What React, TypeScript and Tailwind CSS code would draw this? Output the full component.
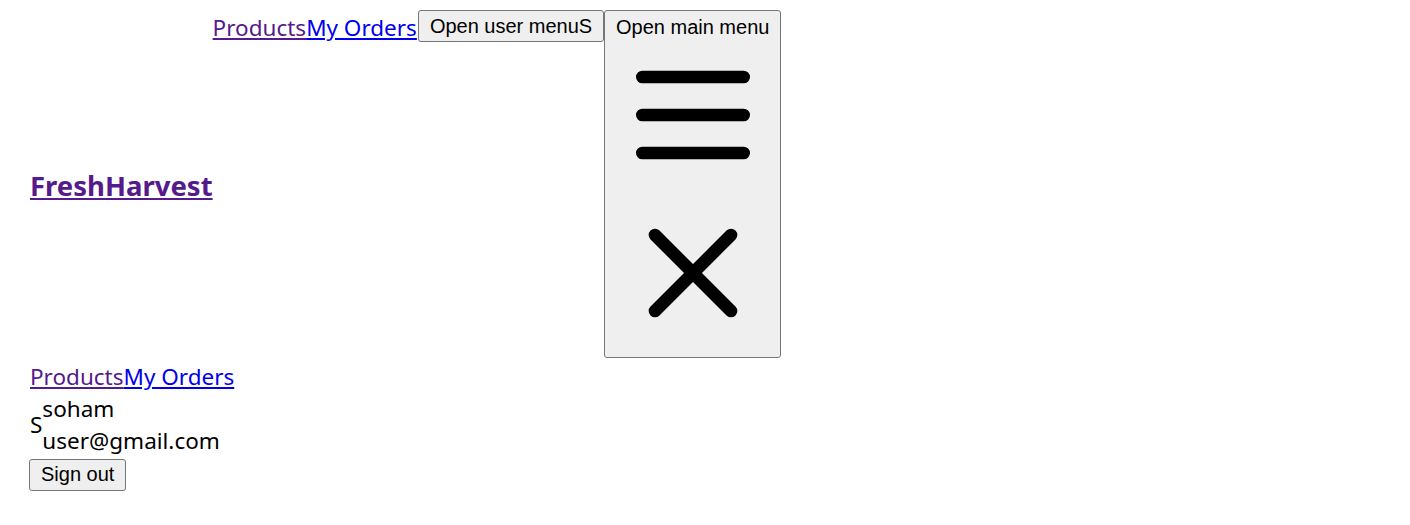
export default function App() {
  const btn =
    "bg-[#efefef] border border-[#767676] rounded-[3px] text-black text-[20px] leading-[23px] font-['Liberation_Sans',Arial,sans-serif]";
  return (
    <div className="min-h-[525px] bg-white pl-[30px] pt-[10px] font-['Noto_Sans',sans-serif] text-[22.5px] leading-[32px] text-black">
      {/* Header row */}
      <div className="flex items-start">
        <h2 className="self-center pt-[4px]">
          <a href="#" className="text-[27.5px] font-bold leading-[38px] text-[#551a8b] underline">
            FreshHarvest
          </a>
        </h2>
        <div className="flex pt-[2px] pr-[1px]">
          <a href="#" className="text-[#551a8b] underline">Products</a>
          <a href="#" className="text-[#0000ee] underline">My Orders</a>
        </div>
        <button className={`${btn} h-[32px] px-[11px]`}>
          Open user menu<span>S</span>
        </button>
        <button className={`${btn} flex h-[348px] w-[177px] flex-col items-center pt-[5px]`}>
          <span className="block">Open main menu</span>
          <svg className="block h-[152px] w-[152px]" viewBox="0 0 24 24" fill="none" stroke="currentColor" strokeWidth="2" strokeLinecap="round">
            <path d="M4 6h16M4 12h16M4 18h16" />
          </svg>
          <svg className="mt-[6px] block h-[152px] w-[152px]" viewBox="0 0 24 24" fill="none" stroke="currentColor" strokeWidth="2" strokeLinecap="round">
            <path d="M18 6 6 18M6 6l12 12" />
          </svg>
        </button>
      </div>

      {/* Mobile menu */}
      <div className="mt-[3px]">
        <div className="flex">
          <a href="#" className="text-[#551a8b] underline">Products</a>
          <a href="#" className="text-[#0000ee] underline">My Orders</a>
        </div>
        <div className="flex items-center">
          <div>S</div>
          <div>
            <div>soham</div>
            <div>user@gmail.com</div>
          </div>
        </div>
        <button className={`${btn} -ml-[1px] h-[32px] px-[11px]`}>Sign out</button>
      </div>
    </div>
  );
}
